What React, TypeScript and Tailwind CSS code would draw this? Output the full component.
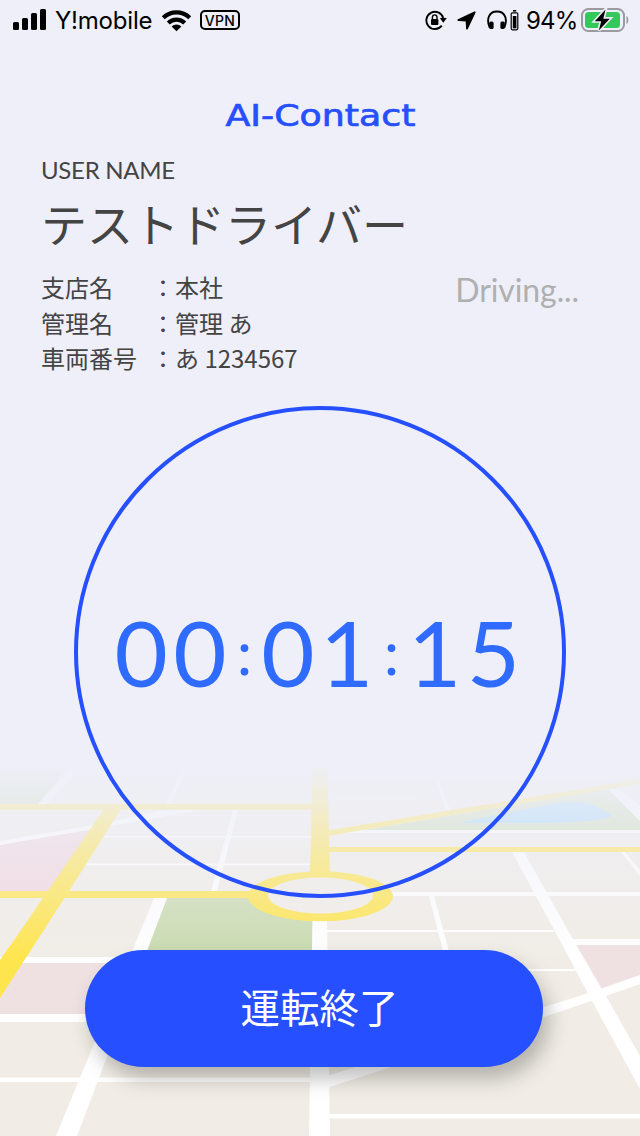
import { ReactNode } from "react";

const details = [
  { label: "支店名", value: "本社" },
  { label: "管理名", value: "管理 あ" },
  { label: "車両番号", value: "あ 1234567" },
];

function StatusBar() {
  return (
    <div className="flex h-10 items-center justify-between pl-[13px] pr-[11px] font-['Inter',sans-serif] text-black">
      <div className="flex items-center">
        <svg className="mb-px" width="33" height="21" viewBox="0 0 33 21">
          <rect x="0" y="13" width="6" height="8" rx="1.5" />
          <rect x="9" y="9" width="6" height="12" rx="1.5" />
          <rect x="18" y="4" width="6" height="17" rx="1.5" />
          <rect x="27" y="0" width="6" height="21" rx="1.5" />
        </svg>
        <span className="ml-[9px] w-[98px] whitespace-nowrap pt-[2px] text-[24px] leading-10 tracking-[-0.2px]">
          Y!mobile
        </span>
        <svg className="ml-[8px]" width="31" height="23" viewBox="0 0 31 23">
          <g fill="none" stroke="#000" strokeWidth="4.2">
            <path d="M2.3 8.7a19 19 0 0 1 26.4 0" />
            <path d="M7.3 14a11.8 11.8 0 0 1 16.4 0" />
          </g>
          <path d="M15.5 22.3l-4.9-4.9a7 7 0 0 1 9.8 0z" />
        </svg>
        <span className="ml-[8px] flex h-[20px] w-10 items-center justify-center rounded-[5px] border-2 border-black text-[14px] font-medium tracking-[0.4px]">
          VPN
        </span>
      </div>
      <div className="flex items-center">
        <svg width="22" height="20" viewBox="0 0 22 20">
          <path
            d="M16.8 15.6A8.6 8.6 0 1 1 18.2 8"
            fill="none"
            stroke="#000"
            strokeWidth="1.9"
          />
          <path d="M14.8 8h7l-3.5 4.7z" />
          <rect x="6" y="9" width="7.4" height="6" rx="1" />
          <path d="M7.4 9V7.2a2.3 2.3 0 0 1 4.6 0V9" fill="none" stroke="#000" strokeWidth="1.4" />
        </svg>
        <svg className="ml-[10px]" width="19" height="19" viewBox="0 0 19 19">
          <path
            d="M17.7 1.3L1.3 9l8.2.5.5 8.200z"
            stroke="#000"
            strokeWidth="1.8"
            strokeLinejoin="round"
          />
        </svg>
        <svg className="ml-[11px]" width="32" height="21" viewBox="0 0 32 21">
          <path
            d="M2.7 17.5C-1 9 2 1.5 10 1.5s11 7.5 7.3 16"
            fill="none"
            stroke="#000"
            strokeWidth="1.9"
          />
          <rect x="2.2" y="11.5" width="4.4" height="7.5" rx="1.6" />
          <rect x="13.4" y="11.5" width="4.4" height="7.5" rx="1.6" />
          <rect x="24.2" y="2.8" width="6.6" height="17" rx="1.2" fill="none" stroke="#000" strokeWidth="1.2" />
          <rect x="25.8" y="6" width="3.6" height="12.3" />
          <rect x="26" y="0" width="3.2" height="1.6" />
        </svg>
        <span className="ml-[7px] w-[50px] whitespace-nowrap pt-[2px] text-[24px] leading-10 tracking-[-0.8px]">
          94%
        </span>
        <svg className="ml-[5px]" width="48" height="24" viewBox="0 0 48 24">
          <rect x="1" y="1" width="42" height="22" rx="6.5" fill="none" stroke="#9a9aa0" strokeWidth="2" />
          <path d="M45.5 8v8c2.4-1 2.4-7 0-8z" fill="#9a9aa0" />
          <rect x="4" y="4" width="35" height="16" rx="3.5" fill="#34c759" />
          <path
            d="M24.5 1.5L13.8 13.2h6.4L17.8 22.5 28.8 10.7h-6.5z"
            stroke="#eeeff8"
            strokeWidth="3.2"
          />
          <path d="M24.5 1.5L13.8 13.2h6.4L17.8 22.5 28.8 10.7h-6.5z" />
        </svg>
      </div>
    </div>
  );
}

function MapBackground() {
  return (
    <svg
      className="col-start-1 row-start-1 self-end"
      width="640"
      height="396"
      viewBox="0 740 640 396"
    >
      <defs>
        <linearGradient id="fade" gradientUnits="userSpaceOnUse" x1="0" y1="740" x2="0" y2="980">
          <stop offset="0" stopColor="#eeeff8" />
          <stop offset="0.1" stopColor="#eeeff8" />
          <stop offset="0.28" stopColor="#eeeff8" stopOpacity="0.77" />
          <stop offset="0.46" stopColor="#eeeff8" stopOpacity="0.53" />
          <stop offset="0.65" stopColor="#eeeff8" stopOpacity="0.32" />
          <stop offset="0.92" stopColor="#eeeff8" stopOpacity="0" />
        </linearGradient>
      </defs>
      <rect y="740" width="640" height="396" fill="#f1ede6" />

      {/* parks */}
      <g fill="#c9dbae">
        <path d="M0 740h90L38 804H0z" />
        <path d="M167 898h146v80H136z" />
        <path d="M365 830L608 789l32 30v11z" />
      </g>
      <path
        d="M458 823L550 804q20-4 36-1 18 6 26 12-2 6-62 8z"
        fill="#98d2fa"
      />

      {/* blocks */}
      <g fill="#efe0e1">
        <path d="M0 845L93 828 48 891H0z" fill="#f2d6dc" />
        <path d="M0 963h120v51H0z" />
        <path d="M577 945h63v30l-39 13z" />
      </g>

      {/* side streets */}
      <g fill="#fff">
        <path d="M38 804h9l31-34h-8z" />
        <path d="M166 804h5l14-34h-3z" />
        <path d="M0 841L100 824 165 810h35L100 828 0 845z" />
        <path d="M104 836h207v1.5H104zM86 863.5h224v1.7H86zM233 810h5L217 891h-6z" />
        <path d="M154 898h13L77 1136H56z" />
        <path d="M312.5 915H327L330 1136H309z" />
        <path d="M0 957h140v6H0zM0 1014h120v8H0zM0 1077.5h310v4.5H0z" />
        <path d="M436 780h3l11 30h-4zM345 830h295v3H345z" />
        <path d="M608 789h12l20 17v15zM512 852h12L579 950 606 996 640 1056v33L592 1001 565 950z" />
        <path d="M621 852h4l15 18v6zM390 892h250v4H390z" />
        <path d="M429 896h5l16 59h-6zM327 930h227v2H327zM573 939h67v6H573zM520 969h57v2H520z" />
        <path d="M640 975v9L606 996 544 1017 327 1088v-12L544 1007 592 992z" />
        <path d="M329 1114h311v4.5H329z" />
      </g>
      <path
        d="M0 815.5h311M328 776.5h312M328 799.5h90M328 816h60"
        stroke="#fff"
        strokeOpacity="0.6"
      />

      {/* main roads */}
      <g fill="#ffe54d">
        <path d="M0 804h313v5.5H0zM0 891h252v7H0z" />
        <path d="M104 809h17L69 891 40 936 0 998V960L17 936 43 898z" />
        <path d="M313 750h14L330 875H310z" />
        <path d="M327 830.5L640 779v5L327 836z" />
        <path d="M327 847h313v5H327z" />
        <ellipse cx="320.5" cy="896.3" rx="72.5" ry="25" />
      </g>
      <ellipse cx="320.5" cy="895.5" rx="52.5" ry="18" fill="#f1ede6" />

      <rect y="740" width="640" height="240" fill="url(#fade)" />
    </svg>
  );
}

function TimerRing({ children }: { children: ReactNode }) {
  return (
    <div className="mx-auto mt-[29px] flex h-[492px] w-[492px] shrink-0 items-center justify-center rounded-full border-4 border-[#264fff]">
      {children}
    </div>
  );
}

function TimerColon() {
  return (
    <span className="w-[29.3px] -translate-y-[12px] pr-[4px] text-center text-[62px] tracking-normal">
      :
    </span>
  );
}

export default function App() {
  return (
    <main className="grid h-[1136px] w-[640px] overflow-hidden bg-[#eeeff8] font-['Lato','Noto_Sans_CJK_JP',sans-serif] text-[#444]">
      <MapBackground />

      <div className="relative col-start-1 row-start-1 flex flex-col">
        <StatusBar />

        <h1 className="mt-[56px] flex h-10 items-center justify-center whitespace-nowrap font-['DejaVu_Sans',sans-serif] text-[30px] leading-10 text-[#264fff]">
          <span className="inline-block scale-x-[1.21] [-webkit-text-stroke:0.7px_#264fff]">
            AI-Contact
          </span>
        </h1>

        <section className="px-[41px] pt-[19px]">
          <p className="h-[30px] text-[24px] leading-[30px] tracking-[-0.3px]">
            USER NAME
          </p>
          <p className="mt-[7px] h-[60px] whitespace-nowrap font-['Noto_Sans_CJK_JP',sans-serif] text-[46px] leading-[60px]">
            テストドライバー
          </p>
          <div className="mt-[17px] flex h-[108px] justify-between">
            <dl className="font-['Noto_Sans_CJK_JP',sans-serif] text-[24px] leading-[35.5px]">
              {details.map(({ label, value }) => (
                <div key={label} className="flex">
                  <dt className="w-[110px]">{label}</dt>
                  <dd className="whitespace-nowrap">
                    <span className="inline-block w-6">：</span>
                    {value}
                  </dd>
                </div>
              ))}
            </dl>
            <p className="mr-[20px] pt-[3px] text-[32px] leading-[36px] tracking-[-0.1px] text-[#b0b0b0]">
              Driving...
            </p>
          </div>
        </section>

        <TimerRing>
          <time className="flex items-baseline whitespace-nowrap text-[92px] leading-none tracking-[5.4px] text-[#306bff]">
            <span>00</span>
            <TimerColon />
            <span>01</span>
            <TimerColon />
            <span>15</span>
          </time>
        </TimerRing>

        <button className="ml-[85px] mt-[52px] h-[117px] w-[458px] shrink-0 rounded-full bg-[#264fff] pb-[6px] pl-[11px] font-['Noto_Sans_CJK_JP',sans-serif] text-[39.5px] text-white shadow-[6px_12px_20px_rgba(0,0,0,0.25)]">
          運転終了
        </button>
      </div>
    </main>
  );
}
